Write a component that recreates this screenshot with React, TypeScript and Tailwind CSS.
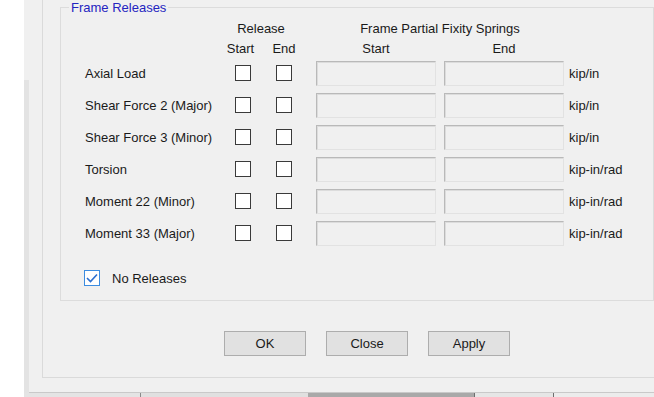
const rows = [
  { label: "Axial Load", unit: "kip/in" },
  { label: "Shear Force 2 (Major)", unit: "kip/in" },
  { label: "Shear Force 3 (Minor)", unit: "kip/in" },
  { label: "Torsion", unit: "kip-in/rad" },
  { label: "Moment 22 (Minor)", unit: "kip-in/rad" },
  { label: "Moment 33 (Major)", unit: "kip-in/rad" },
];

function Box() {
  return <span className="block h-[16px] w-[16px] shrink-0 border border-[#3a3a3a] bg-white" />;
}

function Field() {
  return (
    <span className="block h-[25px] w-[120px] shrink-0 border border-t-[#b9b9b9] border-l-[#b9b9b9] border-r-[#e2e2e2] border-b-[#e2e2e2] bg-[#f0f0f0] shadow-[inset_1px_1px_0_#dcdcdc]" />
  );
}

function Btn({ children }: { children: string }) {
  return (
    <button className="flex h-[25px] w-[82px] items-center justify-center border border-[#adadad] bg-[#e1e1e1] text-[13px] text-[#1a1a1a]">
      {children}
    </button>
  );
}

export default function App() {
  return (
    <div className="flex h-[397px] w-[654px] flex-col overflow-hidden bg-white font-['Liberation_Sans',Arial,sans-serif] text-[13px] leading-[15px] text-[#1a1a1a]">
      <div className="flex h-[393px]">
        <div className="w-[24px] bg-white" />
        <div className="flex w-[5px] flex-col">
          <div className="h-[80px] bg-[#f0f0f0]" />
          <div className="flex-1 bg-[#e3e3e3]" />
        </div>
        <div className="flex-1 border-b border-[#c9c9c9] bg-[#f0f0f0] pl-[13px]">
          <div className="h-[378px] border-b border-l border-[#dadada] pl-[17px]">
            <fieldset className="h-[301px] border border-[#dcdcdc]">
              <legend className="ml-[8px] px-[2px] text-[#2424c0]">Frame Releases</legend>

              <div className="ml-[24px] mt-[6px]">
                <div className="flex h-[15px]">
                  <span className="w-[150px]" />
                  <span className="flex w-[52px] justify-center whitespace-nowrap">Release</span>
                  <span className="w-[29px]" />
                  <span className="flex w-[248px] justify-center whitespace-nowrap">Frame Partial Fixity Springs</span>
                </div>
                <div className="mt-[5px] flex h-[15px]">
                  <span className="w-[135px]" />
                  <span className="flex w-[41px] justify-center">Start</span>
                  <span className="flex w-[46px] justify-center">End</span>
                  <span className="w-[9px]" />
                  <span className="flex w-[120px] justify-center">Start</span>
                  <span className="w-[8px]" />
                  <span className="flex w-[120px] justify-center">End</span>
                </div>

                <div className="mt-[1px] flex flex-col">
                  {rows.map((r) => (
                    <div key={r.label} className="flex h-[32px] items-center">
                      <span className="w-[150px] whitespace-nowrap">{r.label}</span>
                      <Box />
                      <span className="ml-[25px]">
                        <Box />
                      </span>
                      <span className="ml-[24px]">
                        <Field />
                      </span>
                      <span className="ml-[8px]">
                        <Field />
                      </span>
                      <span className="ml-[5px] whitespace-nowrap">{r.unit}</span>
                    </div>
                  ))}
                </div>

                <div className="-ml-[1px] mt-[21px] flex h-[16px] items-center gap-[12px]">
                  <span className="flex h-[16px] w-[16px] items-center justify-center border border-[#3c8ce0] bg-white">
                    <svg width="12" height="10" viewBox="0 0 12 10" fill="none">
                      <path d="M1 5 L4.5 8.5 L11 1.5" stroke="#2b6fd0" strokeWidth="1.6" />
                    </svg>
                  </span>
                  <span>No Releases</span>
                </div>
              </div>
            </fieldset>

            <div className="ml-[164px] mt-[30px] flex gap-[20px]">
              <Btn>OK</Btn>
              <Btn>Close</Btn>
              <Btn>Apply</Btn>
            </div>
          </div>
        </div>
      </div>
      <div className="flex h-[4px]">
        <div className="w-[24px] bg-white" />
        <div className="w-[116px] bg-[#e4e4e4]" />
        <div className="w-[1px] bg-[#8a8a8a]" />
        <div className="w-[167px] bg-[#e0e0e0]" />
        <div className="w-[166px] bg-[#a9a9a9]" />
        <div className="w-[1px] bg-[#6e6e6e]" />
        <div className="w-[78px] bg-[#e6e6e6]" />
        <div className="w-[1px] bg-[#6e6e6e]" />
        <div className="flex-1 bg-[#ececec]" />
      </div>
    </div>
  );
}
